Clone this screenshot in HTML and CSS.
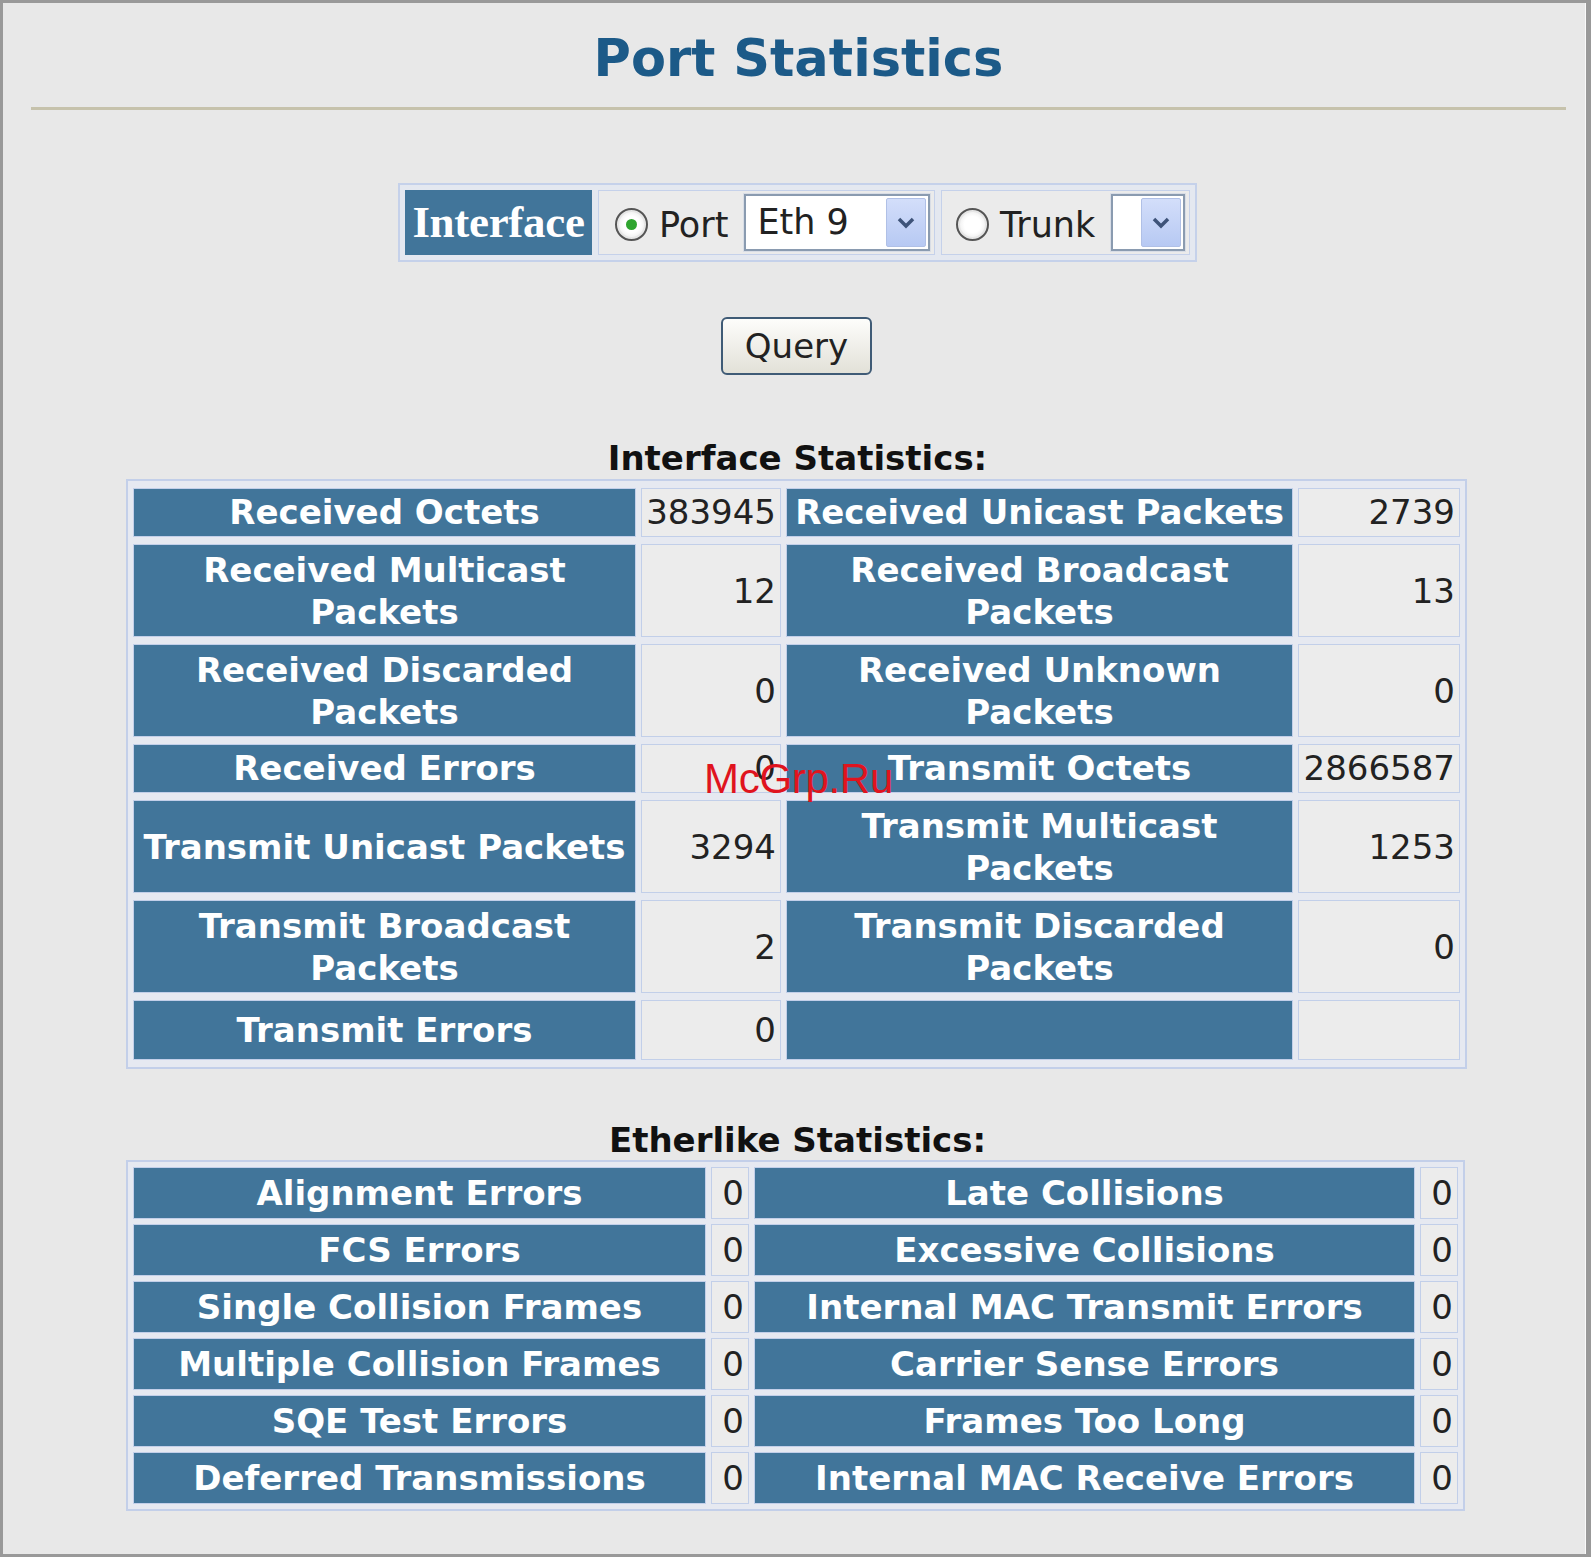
FILE: index.html
```html
<!DOCTYPE html>
<html lang="en">
<head>
  <meta charset="UTF-8" />
  <title>Port Statistics</title>
  <link rel="stylesheet" href="styles.css">
</head>
<body>
  <div class="quadro">
    <h1 class="titulo">Port Statistics</h1>
    <hr class="linha" />

    <div class="centro">
      <div class="iface">
        <div class="iface-head">Interface</div>
        <div class="iface-cell cell-port">
          <span class="radio on"></span>
          <span class="rotulo">Port</span>
          <div class="sel sel-port">
            <span class="sel-txt">Eth 9</span>
            <span class="sel-btn">
              <svg width="22" height="16" viewBox="0 0 22 16"><path d="M4 4 L11 11 L18 4" fill="none" stroke="#3e5379" stroke-width="3.5"/></svg>
            </span>
          </div>
        </div>
        <div class="iface-cell cell-trunk">
          <span class="radio"></span>
          <span class="rotulo">Trunk</span>
          <div class="sel sel-trunk">
            <span class="sel-btn">
              <svg width="22" height="16" viewBox="0 0 22 16"><path d="M4 4 L11 11 L18 4" fill="none" stroke="#3e5379" stroke-width="3.5"/></svg>
            </span>
          </div>
        </div>
      </div>
    </div>

    <div class="centro acoes">
      <button class="btn-query">Query</button>
    </div>

    <h3 class="secao">Interface Statistics:</h3>
    <table class="stats stats-if">
      <tr>
        <td class="cab c1">Received Octets</td>
        <td class="val c2">383945</td>
        <td class="cab c3">Received Unicast Packets</td>
        <td class="val c4">2739</td>
      </tr>
      <tr class="dupla">
        <td class="cab">Received Multicast Packets</td>
        <td class="val">12</td>
        <td class="cab">Received Broadcast Packets</td>
        <td class="val">13</td>
      </tr>
      <tr class="dupla">
        <td class="cab">Received Discarded Packets</td>
        <td class="val">0</td>
        <td class="cab">Received Unknown Packets</td>
        <td class="val">0</td>
      </tr>
      <tr>
        <td class="cab">Received Errors</td>
        <td class="val">0</td>
        <td class="cab">Transmit Octets</td>
        <td class="val">2866587</td>
      </tr>
      <tr class="dupla">
        <td class="cab">Transmit Unicast Packets</td>
        <td class="val">3294</td>
        <td class="cab">Transmit Multicast Packets</td>
        <td class="val">1253</td>
      </tr>
      <tr class="dupla">
        <td class="cab">Transmit Broadcast Packets</td>
        <td class="val">2</td>
        <td class="cab">Transmit Discarded Packets</td>
        <td class="val">0</td>
      </tr>
      <tr class="ultima">
        <td class="cab">Transmit Errors</td>
        <td class="val">0</td>
        <td class="cab"></td>
        <td class="val"></td>
      </tr>
    </table>

    <h3 class="secao secao-eth">Etherlike Statistics:</h3>
    <table class="stats stats-eth">
      <tr>
        <td class="cab e1">Alignment Errors</td>
        <td class="val e2">0</td>
        <td class="cab e3">Late Collisions</td>
        <td class="val e4">0</td>
      </tr>
      <tr>
        <td class="cab">FCS Errors</td>
        <td class="val">0</td>
        <td class="cab">Excessive Collisions</td>
        <td class="val">0</td>
      </tr>
      <tr>
        <td class="cab">Single Collision Frames</td>
        <td class="val">0</td>
        <td class="cab">Internal MAC Transmit Errors</td>
        <td class="val">0</td>
      </tr>
      <tr>
        <td class="cab">Multiple Collision Frames</td>
        <td class="val">0</td>
        <td class="cab">Carrier Sense Errors</td>
        <td class="val">0</td>
      </tr>
      <tr>
        <td class="cab">SQE Test Errors</td>
        <td class="val">0</td>
        <td class="cab">Frames Too Long</td>
        <td class="val">0</td>
      </tr>
      <tr>
        <td class="cab">Deferred Transmissions</td>
        <td class="val">0</td>
        <td class="cab">Internal MAC Receive Errors</td>
        <td class="val">0</td>
      </tr>
    </table>

    <div class="marca">McGrp.Ru</div>
  </div>
</body>
</html>
```

FILE: styles.css
```css
* {
  margin: 0;
  padding: 0;
  box-sizing: border-box;
}

body {
  font-family: 'DejaVu Sans', Verdana, sans-serif;
  background: #999;
}

.quadro {
  position: relative;
  width: 1591px;
  height: 1557px;
  background: #e8e8e8;
  border: 3px solid #999;
  border-right-width: 5px;
  box-shadow: inset -1px 0 0 #fafafa;
  color: #222;
}

.titulo {
  padding-top: 26px;
  font-size: 51px;
  line-height: 60px;
  font-weight: bold;
  text-align: center;
  color: #1c5a88;
  padding-left: 8px;
}

.linha {
  border: none;
  border-top: 3px solid #c6c2ac;
  margin: 18px 20px 0 28px;
}

.centro {
  display: flex;
  justify-content: center;
}

/* caixa de selecao da interface */
.iface {
  display: flex;
  gap: 6px;
  margin-top: 73px;
  padding: 5px;
  border: 2px solid #c5d1ea;
  background: #e4e8f0;
  margin-left: 6px;
}

.iface-head {
  width: 187px;
  height: 65px;
  background: #41759a;
  color: white;
  font-family: 'Liberation Serif', 'Times New Roman', serif;
  font-weight: bold;
  font-size: 45px;
  line-height: 65px;
  text-align: center;
  letter-spacing: -0.3px;
}

.iface-cell {
  display: flex;
  align-items: center;
  height: 65px;
  border: 1px solid #c5d1ea;
  background: #ebebeb;
  font-size: 35px;
}

.cell-port {
  width: 337px;
  padding-left: 16px;
}

.cell-trunk {
  width: 249px;
  padding-left: 14px;
}

.radio {
  width: 33px;
  height: 33px;
  border-radius: 50%;
  border: 2px solid #555;
  background: radial-gradient(circle, #fff 40%, #dcdcdc 100%);
  box-shadow: inset 0 0 0 2px #e6e6e6;
  position: relative;
  flex-shrink: 0;
  margin-top: 4px;
}

.radio.on::after {
  content: "";
  position: absolute;
  left: 9px;
  top: 9px;
  width: 11px;
  height: 11px;
  border-radius: 50%;
  background: #2fa52f;
}

.rotulo {
  margin-left: 11px;
  margin-top: 4px;
  color: #222;
}

.sel {
  display: flex;
  align-items: stretch;
  height: 57px;
  background: white;
  border: 2px solid #8a9bb0;
  box-shadow: 0 0 0 1px #d8dde6;
  padding: 2px;
}

.sel-port {
  width: 186px;
  margin-left: 16px;
}

.sel-trunk {
  width: 74px;
  margin-left: 16px;
  justify-content: flex-end;
}

.sel-txt {
  flex: 1;
  padding-left: 9px;
  line-height: 48px;
  color: #222;
}

.sel-btn {
  width: 40px;
  display: flex;
  align-items: center;
  justify-content: center;
  background: linear-gradient(#d3defa, #b7c9f3);
  border: 1px solid #b0c0e6;
  border-radius: 2px;
}

.acoes {
  margin-top: 55px;
}

.btn-query {
  width: 151px;
  height: 58px;
  font-family: 'DejaVu Sans', Verdana, sans-serif;
  font-size: 34px;
  color: #222;
  background: linear-gradient(#fdfdfb, #e2e1d8);
  border: 2px solid #3f5b76;
  border-radius: 6px;
  margin-left: 4px;
}

.secao {
  margin-top: 63px;
  font-size: 34px;
  line-height: 40px;
  font-weight: bold;
  text-align: center;
  color: #111;
  padding-left: 6px;
}

.secao-eth {
  margin-top: 51px;
}

/* tabelas de estatisticas */
.stats {
  margin: 1px auto 0;
  border: 2px solid #c3cfe9;
  border-collapse: separate;
  border-spacing: 5px 7px;
  background: #e6e9f1;
  table-layout: fixed;
}

.stats-if {
  width: 1341px;
  position: relative;
  left: 2px;
}

.stats-eth {
  width: 1339px;
  margin-top: 0;
  border-spacing: 5px;
  position: relative;
  left: 1px;
}

.stats td {
  border: 1px solid #c2cfe9;
  padding: 3px 4px;
  line-height: 41px;
  height: 49px;
  font-size: 34px;
}

.stats tr.dupla td {
  height: 93px;
  padding-top: 2px;
  padding-bottom: 2px;
  line-height: 42px;
}

.stats tr.ultima td {
  height: 60px;
}

.stats-eth td {
  height: 52px;
}

.cab {
  background: #41759a;
  color: white;
  font-weight: bold;
  text-align: center;
}

.val {
  background: #ececec;
  text-align: right;
  color: #222;
}

.c1 { width: 503px; }
.c2 { width: 140px; }
.c3 { width: 507px; }
.c4 { width: 162px; }

.e1 { width: 573px; }
.e2 { width: 38px; }
.e3 { width: 661px; }
.e4 { width: 38px; }

.stats td.c1,
.stats td.c3 {
  padding-left: 0;
  padding-right: 0;
}

.marca {
  position: absolute;
  left: 701px;
  top: 752px;
  font-family: 'Liberation Sans', Arial, sans-serif;
  font-size: 42px;
  color: #e0141e;
  letter-spacing: -0.3px;
}
```
